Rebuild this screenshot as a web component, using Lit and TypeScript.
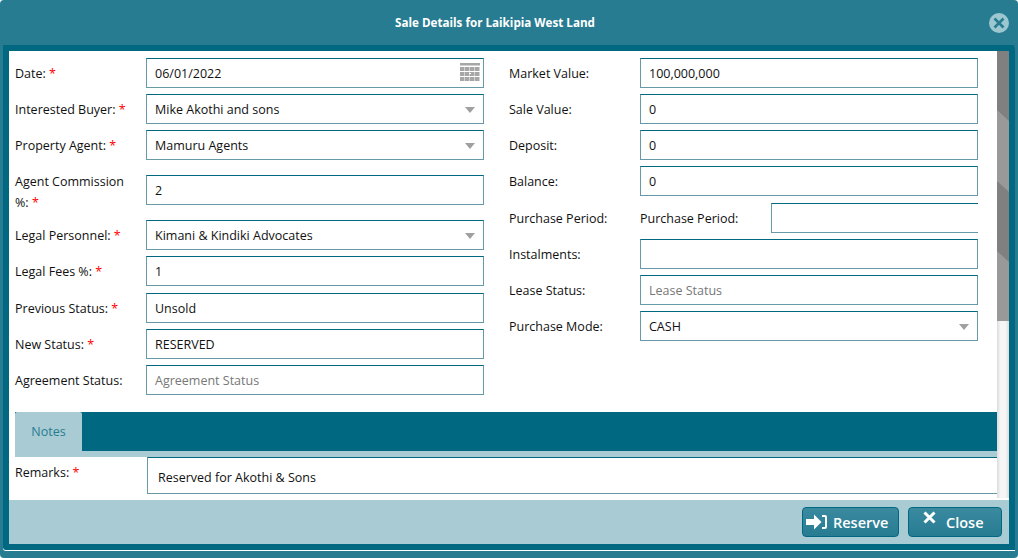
import { LitElement, html, css, svg } from "lit";
import { customElement } from "lit/decorators.js";

const F = (label: string, req: boolean, control: unknown, cls = "") => html`
  <div class="row ${cls}">
    <div class="lab">${label}${req ? html` <span class="req">*</span>` : ""}</div>
    ${control}
  </div>`;
const inp = (v: string) => html`<div class="box">${v}</div>`;
const ph = (v: string) => html`<div class="box ph">${v}</div>`;
const sel = (v: string) => html`<div class="box sel">${v}<span class="caret"></span></div>`;

const calCells = [4, 9, 14].flatMap((y) =>
  [0, 5, 10, 15].map((x) => svg`<rect x="${x}" y="${y}" width="4.5" height="4"/>`)
);

@customElement("app-root")
export class AppRoot extends LitElement {
  static styles = css`
    :host { display: block; width: 1018px; height: 558px; overflow: hidden; font-family: "Open Sans", "Noto Sans", sans-serif; font-size: 12.5px; color: #111; background:#fff; }
    * { box-sizing: border-box; }
    .win { height: 558px; background: #277c92; border-radius: 4px; display: flex; flex-direction: column; padding: 0 3px 8px 3px; }
    .title { height: 45px; flex: none; display: flex; align-items: center; justify-content: center; color: #fff; font-weight: 700; font-size: 11.65px; position: relative; padding-right: 28px; }
    .x { position: absolute; right: 6px; top: 13px; width: 20px; height: 20px; }
    .body { flex: 1; border: 6px solid #006880; border-radius: 0 3px 0 3px; background: #fff; display: flex; flex-direction: column; min-height: 0; position: relative; box-shadow: 0 1px 0 #fff; }
    .content { height: 449px; flex: none; position: relative; overflow: hidden; padding: 7px 12px 0 6px; }
    .cols { display: flex; }
    .col1 { width: 469px; flex: none; }
    .col2 { width: 469px; flex: none; margin-left: 25px; }
    .row { display: flex; align-items: center; margin-bottom: 6px; }
    .row.shift { margin-top: 7px; }
    .lab { width: 131px; flex: none; line-height: 21px; padding: 3px 6px 3px 0; }
    .row.tall .lab { padding: 5px 6px 1px 0; }
    .req { color: #f00; }
    .box { flex: 1; height: 30px; border: 1px solid #669aa6; border-top-color: #006880; display: flex; align-items: center; padding: 0 8px; position: relative; min-width: 0; background:#fff; }
    .ph { color: #777; }
    .caret { position: absolute; right: 8px; top: 12px; border: 5.5px solid transparent; border-top: 6px solid #a0a0a0; border-bottom: 0; }
    .cal { position: absolute; right: 3px; top: 4px; }
    .pp { display: flex; align-items: center; flex: 1; overflow: hidden; }
    .pp .in { width: 131px; flex: none; }
    .pp .box { flex: 1; border-right: 0; }
    .tabs { height: 39px; background: #006880; width: 982px; display: flex; margin-top: 11px; }
    .tab { width: 67px; height: 39px; background: #a9cbd4; color: #277c92; display: flex; align-items: center; justify-content: center; border-radius: 2px 2px 0 0; }
    .gap { height: 6px; background: #a9cbd4; width: 982px; }
    .rem { display: flex; width: 982px; }
    .rem .lab { width: 132px; padding: 0; line-height: 32px; height: 32px; }
    .rem .box { height: 37px; padding: 3px 10px 0; border-right: 0; }
    .sb { position: absolute; right: 0; top: 0; bottom: 2px; width: 12px; background: linear-gradient(90deg, #dcdcdc, #f6f6f6 30%, #f6f6f6 70%, #dcdcdc); }
    .th { display: block; width: 12px; height: 270px; }
    .foot { flex: 1; background: #a9cbd4; display: flex; justify-content: flex-end; align-items: center; gap: 9px; padding: 0 7px 0 0; }
    .btn { height: 30px; width: 97px; border: 1px solid #006880; border-radius: 4px; background: linear-gradient(#3a8aa0, #277c92); color: #fff; font-weight: 600; font-size: 14.5px; display: flex; align-items: center; gap: 6px; padding-left: 3px; }
    .btn svg { flex: none; }
    .btn.c { width: 94px; gap: 10px; padding-left: 14px; }
    .btn.c span { margin-top: 1px; }
    .btn.c svg { margin-top: -9px; }
  `;
  render() {
    return html`<div class="win">
      <div class="title">Sale Details for Laikipia West Land
        <svg class="x" viewBox="0 0 20 20"><circle cx="10" cy="10" r="10" fill="#9cc6d0"/><path d="M5.5 5.5l9 9M14.5 5.5l-9 9" stroke="#277c92" stroke-width="2.6"/></svg>
      </div>
      <div class="body">
        <div class="content">
          <div class="cols">
            <div class="col1">
              ${F("Date:", true, html`<div class="box">06/01/2022
                <svg class="cal" width="20" height="18" viewBox="0 0 20 18" fill="#a6a6a6"><rect x="0" y="0" width="20" height="2.500"/>${calCells}<path d="M9 10h2v-1h0v1h0v1H9z" fill="#fff"/></svg></div>`)}
              ${F("Interested Buyer:", true, sel("Mike Akothi and sons"))}
              ${F("Property Agent:", true, sel("Mamuru Agents"))}
              ${F("Agent Commission %:", true, inp("2"), "tall")}
              ${F("Legal Personnel:", true, sel("Kimani & Kindiki Advocates"))}
              ${F("Legal Fees %:", true, inp("1"))}
              ${F("Previous Status:", true, inp("Unsold"), "shift")}
              ${F("New Status:", true, inp("RESERVED"))}
              ${F("Agreement Status:", false, ph("Agreement Status"))}
            </div>
            <div class="col2">
              ${F("Market Value:", false, inp("100,000,000"))}
              ${F("Sale Value:", false, inp("0"))}
              ${F("Deposit:", false, inp("0"))}
              ${F("Balance:", false, inp("0"))}
              ${F("Purchase Period:", false, html`<div class="pp"><div class="in">Purchase Period:</div><div class="box"></div></div>`, "shift")}
              ${F("Instalments:", false, inp(""))}
              ${F("Lease Status:", false, ph("Lease Status"))}
              ${F("Purchase Mode:", false, sel("CASH"))}
            </div>
          </div>
          <div class="tabs"><div class="tab">Notes</div></div>
          <div class="gap"></div>
          <div class="rem"><div class="lab">Remarks: <span class="req">*</span></div><div class="box">Reserved for Akothi &amp; Sons</div></div>
          <div class="sb">
            <svg class="th" viewBox="0 0 12 270"><rect width="12" height="270" fill="#999"/><path d="M0 0H12V70L0 59zM0 130L12 141V211L0 200z" fill="#808080"/></svg>
          </div>
        </div>
        <div class="foot">
          <div class="btn"><svg width="21" height="16" viewBox="0 0 21 16" fill="#fff"><path d="M0 5h8V.5L15.500 8 8 15.500V11H0zM16 1h3a2 2 0 0 1 2 2v10a2 2 0 0 1-2 2h-3v-2h3V3h-3z"/></svg><span>Reserve</span></div>
          <div class="btn c"><svg width="13" height="13" viewBox="0 0 13 13"><path d="M1.500 1.500l10 10M11.500 1.500l-10 10" stroke="#fff" stroke-width="3"/></svg><span>Close</span></div>
        </div>
      </div>
    </div>`;
  }
}
